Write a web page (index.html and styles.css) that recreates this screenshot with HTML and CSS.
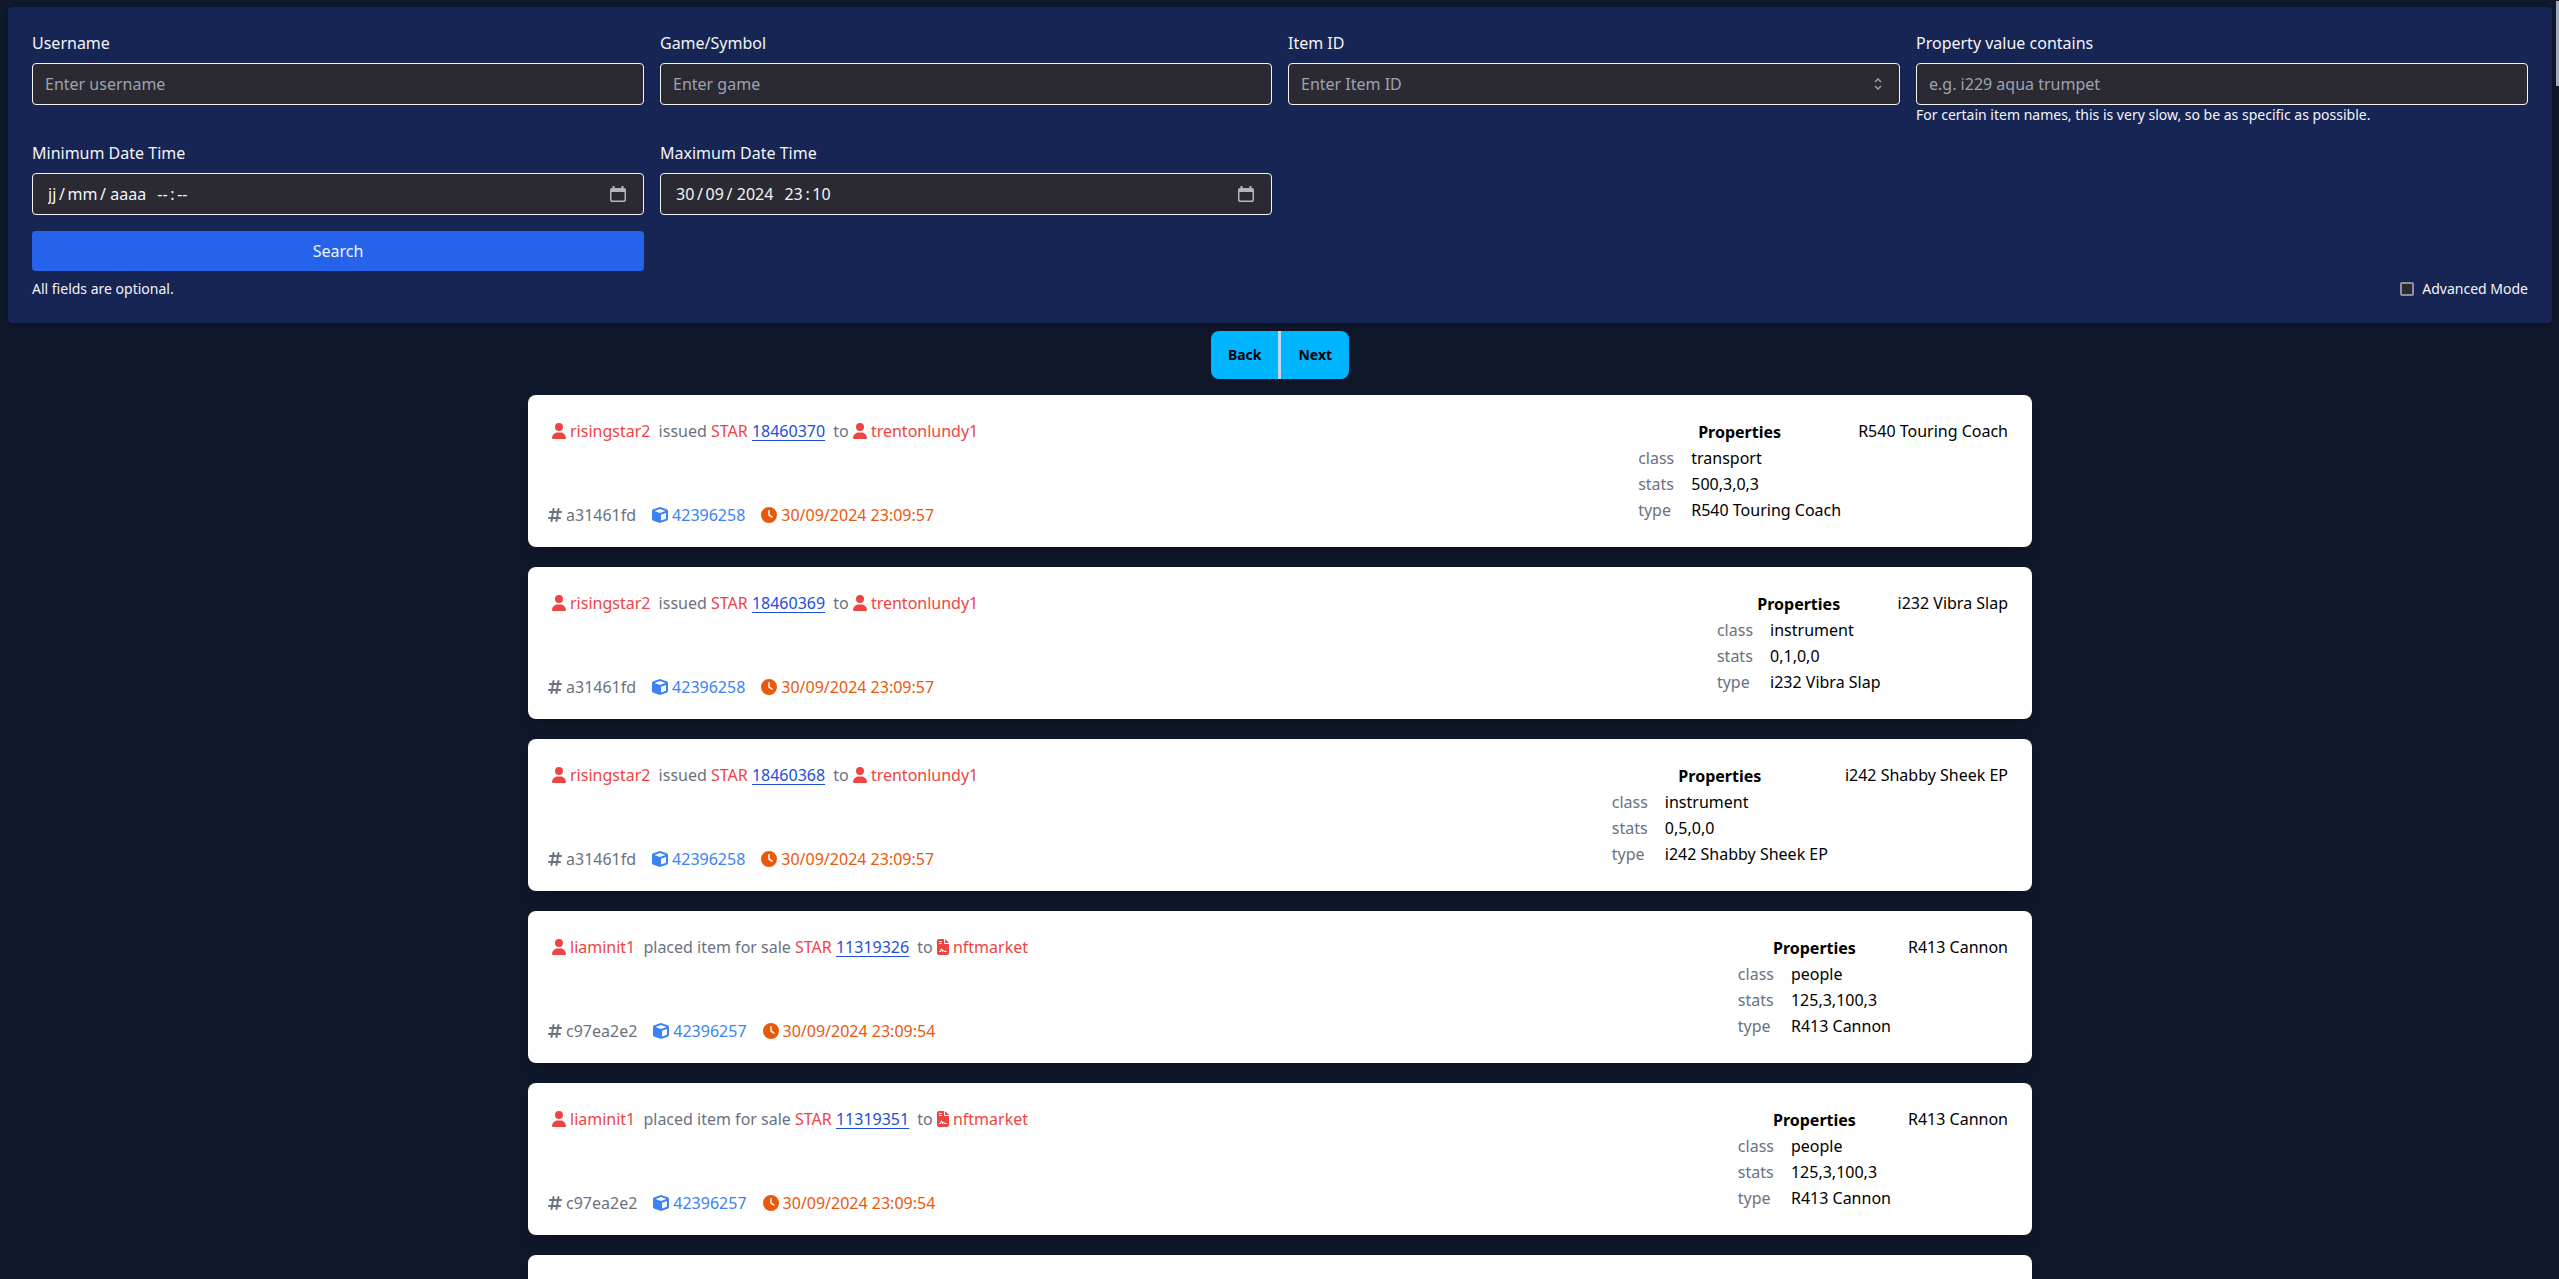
FILE: index.html
```html
<!DOCTYPE html>
<html lang="en">
<head>
<meta charset="utf-8">
<meta name="viewport" content="width=device-width, initial-scale=1">
<title>Item history</title>
<link rel="stylesheet" href="styles.css">
</head>
<body>
    <!-- icon sprites -->
    <svg class="sprites" aria-hidden="true">
        <symbol id="user" viewBox="0 0 448 512"><path d="M224 256A128 128 0 1 0 224 0a128 128 0 1 0 0 256zm-45.7 48C79.8 304 0 383.8 0 482.3C0 498.7 13.3 512 29.7 512H418.3c16.4 0 29.7-13.3 29.7-29.7C448 383.8 368.2 304 269.7 304H178.3z"/></symbol>
        <symbol id="hashtag" viewBox="0 0 448 512"><path d="M181.3 32.4c17.4 2.9 29.2 19.4 26.3 36.8L197.8 128h95.1l11.5-69.3c2.9-17.4 19.4-29.2 36.8-26.3s29.2 19.4 26.3 36.8L357.8 128H416c17.7 0 32 14.3 32 32s-14.3 32-32 32H347.1L325.8 320H384c17.7 0 32 14.3 32 32s-14.3 32-32 32H315.1l-11.5 69.3c-2.9 17.4-19.4 29.2-36.8 26.3s-29.2-19.4-26.3-36.8l9.8-58.7H155.1l-11.5 69.3c-2.9 17.4-19.4 29.2-36.8 26.3s-29.2-19.4-26.3-36.8L90.2 384H32c-17.7 0-32-14.3-32-32s14.3-32 32-32h68.9l21.3-128H64c-17.7 0-32-14.3-32-32s14.3-32 32-32h68.9l11.5-69.3c2.9-17.4 19.4-29.2 36.8-26.3zM187.1 192L165.8 320h95.1l21.3-128H187.1z"/></symbol>
        <symbol id="cube" viewBox="0 0 512 512"><path d="M234.5 5.7c13.9-5 29.1-5 43.1 0l192 68.6C495 83.4 512 107.5 512 134.6V377.4c0 27-17 51.2-42.5 60.3l-192 68.6c-13.9 5-29.1 5-43.1 0l-192-68.6C17 428.6 0 404.5 0 377.4V134.6c0-27 17-51.2 42.5-60.3l192-68.6zM256 66L82.3 128 256 190l173.7-62L256 66zm32 368.6l160-57.1v-188L288 246.6v188z"/></symbol>
        <symbol id="clock" viewBox="0 0 512 512"><path d="M256 0a256 256 0 1 1 0 512A256 256 0 1 1 256 0zM232 120V256c0 8 4 15.5 10.7 20l96 64c11 7.4 25.9 4.4 33.3-6.7s4.4-25.9-6.7-33.3L280 243.2V120c0-13.3-10.7-24-24-24s-24 10.7-24 24z"/></symbol>
        <symbol id="contract" viewBox="0 0 384 512"><path d="M64 0C28.7 0 0 28.7 0 64V448c0 35.3 28.7 64 64 64H320c35.3 0 64-28.7 64-64V160H256c-17.7 0-32-14.3-32-32V0H64zM256 0V128H384L256 0zM80 64h64c8.8 0 16 7.2 16 16s-7.2 16-16 16H80c-8.8 0-16-7.2-16-16s7.2-16 16-16zm0 64h64c8.8 0 16 7.2 16 16s-7.2 16-16 16H80c-8.8 0-16-7.2-16-16s7.2-16 16-16zm54.2 253.8c-6.1 20.3-24.8 34.2-46 34.2H80c-8.8 0-16-7.2-16-16s7.2-16 16-16h8.2c7.1 0 13.3-4.6 15.3-11.4l14.9-49.5c3.4-11.3 13.8-19.1 25.6-19.1s22.2 7.7 25.6 19.1l11.6 38.6c7.4-6.2 16.8-9.7 26.8-9.7c15.9 0 30.4 9 37.5 23.2l4.4 8.8H304c8.8 0 16 7.2 16 16s-7.2 16-16 16H240c-6.1 0-11.6-3.4-14.3-8.8l-8.8-17.7c-1.7-3.4-5.1-5.5-8.8-5.5s-7.2 2.1-8.8 5.5l-8.8 17.7c-2.9 5.9-9.2 9.4-15.7 8.8s-12.1-5.1-13.9-11.3L144 349l-9.8 32.8z"/></symbol>
        <symbol id="calendar" viewBox="0 0 16 16"><path fill-rule="evenodd" d="M2.500 0h2v2h7V0h2v2h.5a2 2 0 0 1 2 2v10a2 2 0 0 1-2 2H2a2 2 0 0 1-2-2V4a2 2 0 0 1 2-2h.5zM1.500 6v7.500a1 1 0 0 0 1 1h11a1 1 0 0 0 1-1V6z"/></symbol>
    </svg>

    <form class="search">
        <div class="fields">
            <div class="field">
                <label for="username">Username</label>
                <div class="box"><input type="text" id="username" placeholder="Enter username"></div>
            </div>
            <div class="field">
                <label for="game">Game/Symbol</label>
                <div class="box"><input type="text" id="game" placeholder="Enter game"></div>
            </div>
            <div class="field">
                <label for="item">Item ID</label>
                <div class="box">
                    <input type="number" id="item" placeholder="Enter Item ID">
                    <svg class="spinner" viewBox="0 0 8 12"><path d="M1 4l3-3 3 3M1 8l3 3 3-3"/></svg>
                </div>
            </div>
            <div class="field">
                <label for="property">Property value contains</label>
                <div class="box"><input type="text" id="property" placeholder="e.g. i229 aqua trumpet"></div>
                <p class="small">For certain item names, this is very slow, so be as specific as possible.</p>
            </div>
            <div class="field">
                <label for="mindate">Minimum Date Time</label>
                <div class="box date">
                    <input type="text" id="mindate" value="jj&thinsp;/&thinsp;mm&thinsp;/&thinsp;&hairsp;aaaa&thinsp; &thinsp;&hairsp;--&thinsp;:&thinsp;--">
                    <svg class="calendar"><use href="#calendar"/></svg>
                </div>
            </div>
            <div class="field">
                <label for="maxdate">Maximum Date Time</label>
                <div class="box date">
                    <input type="text" id="maxdate" value="30&thinsp;/&thinsp;09&thinsp;/&thinsp;&hairsp;2024&thinsp; &thinsp;&hairsp;23&thinsp;:&thinsp;10">
                    <svg class="calendar"><use href="#calendar"/></svg>
                </div>
            </div>
            <button type="submit" class="submit">Search</button>
        </div>
        <div class="options small">
            <p>All fields are optional.</p>
            <label class="advanced"><input type="checkbox"> Advanced Mode</label>
        </div>
    </form>

    <div class="pager">
        <button type="button">Back</button>
        <button type="button">Next</button>
    </div>

    <main class="history">
        <article class="card">
            <div class="event">
                <p class="action"><a class="account" href="#"><svg class="icon narrow"><use href="#user"/></svg>risingstar2</a> issued <span class="symbol">STAR</span> <a class="item" href="#">18460370</a> to <a class="account" href="#"><svg class="icon narrow"><use href="#user"/></svg>trentonlundy1</a></p>
                <p class="meta">
                    <a class="hash" href="#"><svg class="icon narrow"><use href="#hashtag"/></svg>a31461fd</a>
                    <a class="block" href="#"><svg class="icon"><use href="#cube"/></svg>42396258</a>
                    <span class="time"><svg class="icon"><use href="#clock"/></svg>30/09/2024 23:09:57</span>
                </p>
            </div>
            <table>
                <tr><th colspan="2">Properties</th></tr>
                <tr><td class="key">class</td><td>transport</td></tr>
                <tr><td class="key">stats</td><td>500,3,0,3</td></tr>
                <tr><td class="key">type</td><td>R540 Touring Coach</td></tr>
            </table>
            <p class="name">R540 Touring Coach</p>
        </article>

        <article class="card">
            <div class="event">
                <p class="action"><a class="account" href="#"><svg class="icon narrow"><use href="#user"/></svg>risingstar2</a> issued <span class="symbol">STAR</span> <a class="item" href="#">18460369</a> to <a class="account" href="#"><svg class="icon narrow"><use href="#user"/></svg>trentonlundy1</a></p>
                <p class="meta">
                    <a class="hash" href="#"><svg class="icon narrow"><use href="#hashtag"/></svg>a31461fd</a>
                    <a class="block" href="#"><svg class="icon"><use href="#cube"/></svg>42396258</a>
                    <span class="time"><svg class="icon"><use href="#clock"/></svg>30/09/2024 23:09:57</span>
                </p>
            </div>
            <table>
                <tr><th colspan="2">Properties</th></tr>
                <tr><td class="key">class</td><td>instrument</td></tr>
                <tr><td class="key">stats</td><td>0,1,0,0</td></tr>
                <tr><td class="key">type</td><td>i232 Vibra Slap</td></tr>
            </table>
            <p class="name">i232 Vibra Slap</p>
        </article>

        <article class="card">
            <div class="event">
                <p class="action"><a class="account" href="#"><svg class="icon narrow"><use href="#user"/></svg>risingstar2</a> issued <span class="symbol">STAR</span> <a class="item" href="#">18460368</a> to <a class="account" href="#"><svg class="icon narrow"><use href="#user"/></svg>trentonlundy1</a></p>
                <p class="meta">
                    <a class="hash" href="#"><svg class="icon narrow"><use href="#hashtag"/></svg>a31461fd</a>
                    <a class="block" href="#"><svg class="icon"><use href="#cube"/></svg>42396258</a>
                    <span class="time"><svg class="icon"><use href="#clock"/></svg>30/09/2024 23:09:57</span>
                </p>
            </div>
            <table>
                <tr><th colspan="2">Properties</th></tr>
                <tr><td class="key">class</td><td>instrument</td></tr>
                <tr><td class="key">stats</td><td>0,5,0,0</td></tr>
                <tr><td class="key">type</td><td>i242 Shabby Sheek EP</td></tr>
            </table>
            <p class="name">i242 Shabby Sheek EP</p>
        </article>

        <article class="card">
            <div class="event">
                <p class="action"><a class="account" href="#"><svg class="icon narrow"><use href="#user"/></svg>liaminit1</a> placed item for sale <span class="symbol">STAR</span> <a class="item" href="#">11319326</a> to <a class="account" href="#"><svg class="icon file"><use href="#contract"/></svg>nftmarket</a></p>
                <p class="meta">
                    <a class="hash" href="#"><svg class="icon narrow"><use href="#hashtag"/></svg>c97ea2e2</a>
                    <a class="block" href="#"><svg class="icon"><use href="#cube"/></svg>42396257</a>
                    <span class="time"><svg class="icon"><use href="#clock"/></svg>30/09/2024 23:09:54</span>
                </p>
            </div>
            <table>
                <tr><th colspan="2">Properties</th></tr>
                <tr><td class="key">class</td><td>people</td></tr>
                <tr><td class="key">stats</td><td>125,3,100,3</td></tr>
                <tr><td class="key">type</td><td>R413 Cannon</td></tr>
            </table>
            <p class="name">R413 Cannon</p>
        </article>

        <article class="card">
            <div class="event">
                <p class="action"><a class="account" href="#"><svg class="icon narrow"><use href="#user"/></svg>liaminit1</a> placed item for sale <span class="symbol">STAR</span> <a class="item" href="#">11319351</a> to <a class="account" href="#"><svg class="icon file"><use href="#contract"/></svg>nftmarket</a></p>
                <p class="meta">
                    <a class="hash" href="#"><svg class="icon narrow"><use href="#hashtag"/></svg>c97ea2e2</a>
                    <a class="block" href="#"><svg class="icon"><use href="#cube"/></svg>42396257</a>
                    <span class="time"><svg class="icon"><use href="#clock"/></svg>30/09/2024 23:09:54</span>
                </p>
            </div>
            <table>
                <tr><th colspan="2">Properties</th></tr>
                <tr><td class="key">class</td><td>people</td></tr>
                <tr><td class="key">stats</td><td>125,3,100,3</td></tr>
                <tr><td class="key">type</td><td>R413 Cannon</td></tr>
            </table>
            <p class="name">R413 Cannon</p>
        </article>

        <!-- next entry, still loading -->
        <article class="card"></article>
    </main>
    <div class="scroll-thumb"></div>
</body>
</html>
```
FILE: styles.css
```css
* {
    box-sizing: border-box;
}
html {
    scrollbar-width: none;
}
body {
    margin: 0;
    padding: 7px 7px 0 8px;
    background-color: #0f172a;
    font-family: "Noto Sans", sans-serif;
    font-size: 16px;
    line-height: 24px;
}
p {
    margin: 0;
}
a {
    color: inherit;
    text-decoration: none;
}
.sprites {
    display: none;
}
.small {
    font-size: 14px;
    line-height: 20px;
}

/* Search form */
.search {
    padding: 24px;
    border-radius: 4px;
    background-color: #172554;
    color: #f3f4f6;
    box-shadow: 0 4px 6px -1px rgba(0, 0, 0, 0.1), 0 2px 4px -2px rgba(0, 0, 0, 0.1);
}
.fields {
    display: grid;
    grid-template-columns: repeat(4, 1fr);
    gap: 16px;
}
.field > label {
    display: block;
    margin-bottom: 8px;
}
.box {
    display: flex;
    align-items: center;
    height: 42px;
    padding: 0 17px 0 12px;
    border: 1px solid #f3f4f6;
    border-radius: 4px;
    background-color: #2b2a33;
}
.box input {
    flex: 1;
    min-width: 0;
    padding: 0;
    border: 0;
    outline: 0;
    background: none;
    color: #f3f4f6;
    font: inherit;
    appearance: textfield;
}
.box input::placeholder {
    color: #9ca3af;
}
.box.date {
    padding-left: 15px;
}
.spinner {
    width: 8px;
    height: 12px;
    fill: none;
    stroke: #9d9da9;
    stroke-width: 1.5;
}
.calendar {
    width: 16px;
    height: 16px;
    fill: #b4b4bb;
}
.submit {
    grid-column: 1;
    height: 40px;
    border: 0;
    border-radius: 4px;
    background-color: #2563eb;
    color: #f3f4f6;
    font: inherit;
}
.options {
    display: flex;
    justify-content: space-between;
    margin-top: 8px;
}
.advanced {
    display: flex;
    align-items: center;
    gap: 8px;
}
.advanced input {
    appearance: none;
    width: 14px;
    height: 14px;
    margin: 0;
    border: 2px solid #8f8f9d;
    border-radius: 2px;
    background-color: #2b2a33;
}

/* Back / Next */
.pager {
    display: flex;
    justify-content: center;
    margin: 8px 0 16px;
}
.pager button {
    height: 48px;
    padding: 0 17px;
    border: 0;
    background-color: #00b5ff;
    color: #000;
    font: inherit;
    font-size: 14px;
    font-weight: 700;
}
.pager button:first-child {
    border-right: 3px solid #bfdbfe;
    border-radius: 8px 0 0 8px;
}
.pager button:last-child {
    border-radius: 0 8px 8px 0;
}

/* Transactions */
.history {
    display: flex;
    flex-direction: column;
    gap: 20px;
    max-width: 1504px;
    margin: 0 auto;
}
.card {
    display: flex;
    gap: 16px;
    min-height: 152px;
    padding: 24px;
    border-radius: 8px;
    background-color: #fff;
    color: #000;
    box-shadow: 0 10px 15px -3px rgba(0, 0, 0, 0.1), 0 4px 6px -4px rgba(0, 0, 0, 0.1);
}
.event {
    display: flex;
    flex-direction: column;
    flex: 1;
    justify-content: space-between;
    margin: 0 0 -4px -4px;
    color: #6b7280;
}
.action {
    padding-left: 4px;
}
.account {
    margin-right: 4px;
    color: #ef4444;
}
.symbol {
    color: #ef4444;
}
.item {
    margin-right: 4px;
    color: #1d4ed8;
    text-decoration: underline;
    text-underline-offset: 3px;
    text-decoration-skip-ink: none;
}
.meta {
    display: flex;
    gap: 16px;
}
.block {
    color: #3b82f6;
}
.time {
    color: #ea580c;
}
.icon {
    width: 16px;
    height: 16px;
    margin-right: 4px;
    fill: currentColor;
    vertical-align: -2px;
}
.icon.narrow {
    width: 14px;
}
.icon.file {
    width: 12px;
}
.card table {
    border-spacing: 0;
}
.card th,
.card td {
    padding: 1px;
}
.card .key {
    padding-right: 16px;
    color: #6b7280;
}

/* Overlay scrollbar thumb */
.scroll-thumb {
    position: fixed;
    top: 1px;
    right: 0;
    width: 3px;
    height: 85px;
    background-color: #a3abbb;
}
```
